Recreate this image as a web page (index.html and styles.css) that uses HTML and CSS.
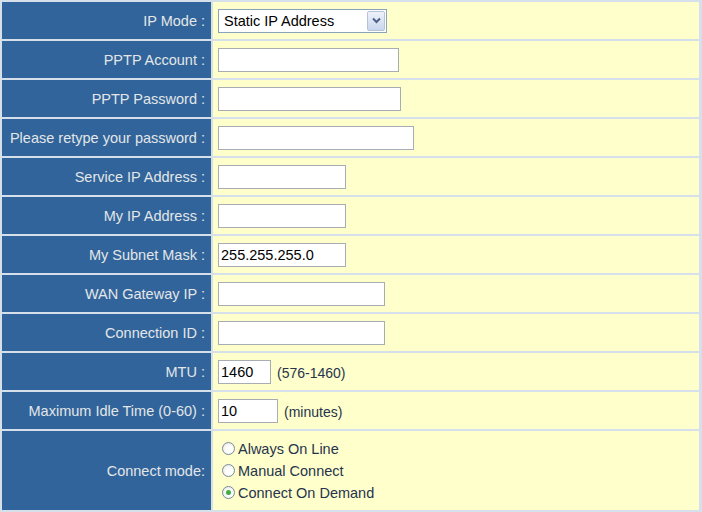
FILE: index.html
```html
<!DOCTYPE html>
<html>
<head>
<meta charset="utf-8">
<link rel="stylesheet" href="styles.css">
</head>
<body>
<div class="form">
  <div class="label">IP Mode :</div>
  <div class="field">
    <div class="select-wrap">
      <select class="select"><option>Static IP Address</option></select>
      <span class="select-btn"><svg width="9" height="7" viewBox="0 0 9 7"><path d="M1 1.5 L4.5 5 L8 1.5" fill="none" stroke="#4d6185" stroke-width="2"/></svg></span>
    </div>
  </div>

  <div class="label">PPTP Account :</div>
  <div class="field"><input class="text w180" type="text"></div>

  <div class="label">PPTP Password :</div>
  <div class="field"><input class="text w182" type="password"></div>

  <div class="label">Please retype your password :</div>
  <div class="field"><input class="text w195" type="password"></div>

  <div class="label">Service IP Address :</div>
  <div class="field"><input class="text w127" type="text"></div>

  <div class="label">My IP Address :</div>
  <div class="field"><input class="text w127" type="text"></div>

  <div class="label">My Subnet Mask :</div>
  <div class="field"><input class="text w127" type="text" value="255.255.255.0"></div>

  <div class="label">WAN Gateway IP :</div>
  <div class="field"><input class="text w166" type="text"></div>

  <div class="label">Connection ID :</div>
  <div class="field"><input class="text w166" type="text"></div>

  <div class="label">MTU :</div>
  <div class="field"><input class="text w52" type="text" value="1460"><span class="unit">(576-1460)</span></div>

  <div class="label">Maximum Idle Time (0-60) :</div>
  <div class="field"><input class="text w59" type="text" value="10"><span class="unit">(minutes)</span></div>

  <div class="label">Connect mode:</div>
  <div class="field radios">
    <label class="radio"><input type="radio" name="mode"><span>Always On Line</span></label>
    <label class="radio"><input type="radio" name="mode"><span>Manual Connect</span></label>
    <label class="radio"><input type="radio" name="mode" checked><span>Connect On Demand</span></label>
  </div>
</div>
</body>
</html>
```
FILE: styles.css
```css
html, body {
  margin: 0;
  padding: 0;
}
body {
  width: 702px;
  height: 512px;
  background: #d6e0eb;
  font-family: "Liberation Sans", Arial, sans-serif;
  overflow: hidden;
}
.form {
  display: grid;
  grid-template-columns: 209px 486px;
  grid-template-rows: repeat(11, 37px) 79px;
  gap: 2px;
  padding: 2px 3px 2px 2px;
}
.label {
  background: #30649a;
  color: #e4e6e8;
  font-size: 14.5px;
  text-align: right;
  padding-right: 6px;
  display: flex;
  align-items: center;
  justify-content: flex-end;
  white-space: nowrap;
}
.field {
  background: #ffffcc;
  display: flex;
  align-items: center;
  padding-left: 5px;
}
.text {
  box-sizing: border-box;
  height: 24px;
  border: 1px solid #a7adb3;
  background: #fff;
  font-family: "Liberation Sans", Arial, sans-serif;
  font-size: 14.5px;
  color: #000;
  padding: 1px 2px 0 2px;
  margin: 0;
  outline: none;
}
.w180 { width: 181px; }
.w182 { width: 183px; }
.w195 { width: 196px; }
.w127 { width: 128px; }
.w166 { width: 167px; }
.w52 { width: 53px; }
.w59 { width: 60px; }
.unit {
  font-size: 14px;
  color: #26344e;
  margin-left: 6px;
  padding-top: 3px;
}
.select-wrap {
  position: relative;
  width: 169px;
  height: 24px;
}
.select {
  appearance: none;
  -webkit-appearance: none;
  box-sizing: border-box;
  width: 169px;
  height: 24px;
  border: 1px solid #8aa2bb;
  background: #fff;
  font-family: "Liberation Sans", Arial, sans-serif;
  font-size: 14.5px;
  color: #000;
  padding: 0 0 0 5px;
  margin: 0;
  outline: none;
}
.select-btn {
  position: absolute;
  top: 2px;
  right: 2px;
  width: 18px;
  height: 20px;
  box-sizing: border-box;
  border: 1px solid #b5c3d8;
  border-radius: 2px;
  background: linear-gradient(#eef2fa, #c9d6ee);
  display: flex;
  align-items: center;
  justify-content: center;
  pointer-events: none;
}
.radios {
  flex-direction: column;
  align-items: flex-start;
  justify-content: center;
  padding-left: 9px;
}
.radio {
  display: flex;
  align-items: center;
  height: 22px;
  font-size: 14.5px;
  color: #26344e;
}
.radio input {
  appearance: none;
  -webkit-appearance: none;
  width: 13px;
  height: 13px;
  margin: 0 3px 0 0;
  border: 1px solid #7b8a9b;
  border-radius: 50%;
  background: radial-gradient(circle at 60% 60%, #ffffff 30%, #e4e4dc 100%);
  box-sizing: border-box;
  position: relative;
}
.radio input:checked::after {
  content: "";
  position: absolute;
  left: 3px;
  top: 3px;
  width: 5px;
  height: 5px;
  border-radius: 50%;
  background: #3fae45;
}
```
